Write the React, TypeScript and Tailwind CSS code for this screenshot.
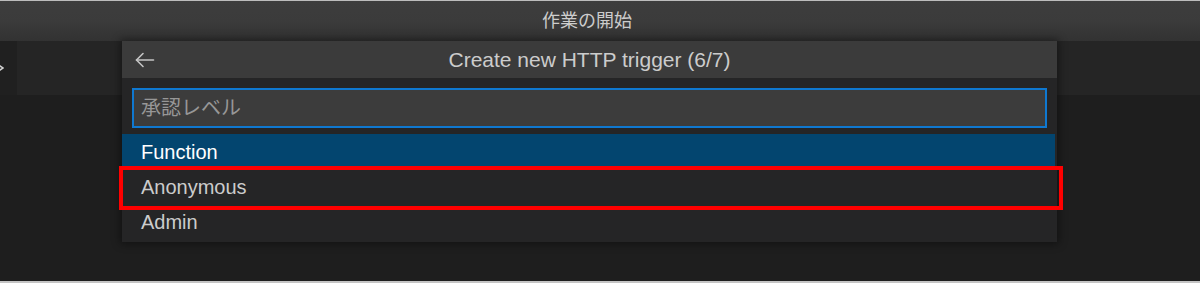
import React from "react";

const items = ["Function", "Anonymous", "Admin"];

function BackArrow() {
  return (
    <svg width="20" height="16" viewBox="0 0 20 16" fill="none" stroke="#c5c5c5" strokeWidth="1.6" strokeLinecap="round" strokeLinejoin="round">
      <path d="M1.5 8h17" />
      <path d="M8 1.5L1.5 8L8 14.5" />
    </svg>
  );
}

// close icon of the previous tab, only its right tip is visible
function CloseTip() {
  return (
    <svg width="4" height="14" viewBox="0 0 4 14" fill="none" stroke="#d0d0d0" strokeWidth="1.5" strokeLinecap="round">
      <path d="M-6 1L3 7L-6 13" />
    </svg>
  );
}

export default function App() {
  return (
    <div
      className="relative w-[1200px] h-[283px] overflow-hidden bg-[#1e1e1e] flex flex-col"
      style={{ fontFamily: '"Liberation Sans", "Noto Sans CJK JP", sans-serif' }}
    >
      {/* window title bar */}
      <div className="h-px bg-[#bcbcbc]" />
      <div className="h-[40px] bg-gradient-to-b from-[#3d3d3d] via-[#3b3b3b] to-[#323232] flex items-center justify-center pr-[26px]">
        <span className="text-[18px] text-[#cccccc] leading-none">作業の開始</span>
      </div>

      {/* editor area */}
      <div className="flex-1 flex flex-col">
        <div className="h-[54px] flex">
          <div className="w-[17px] bg-[#202020] flex items-center">
            <CloseTip />
          </div>
          <div className="flex-1 bg-[#252525]" />
        </div>
        <div className="flex-1 bg-[#1e1e1e]" />
      </div>
      <div className="h-[2px] bg-[#c4c4c4]" />

      {/* quick pick */}
      <div className="absolute left-[122px] top-[41px] w-[935px] bg-[#252526] shadow-[0_0_8px_2px_rgba(0,0,0,0.4)] pb-[3px]">
        <div className="h-[37px] bg-[#3b3b3b] flex items-center relative">
          <div className="pl-[13px] flex items-center">
            <BackArrow />
          </div>
          <div className="absolute inset-0 flex items-center justify-center">
            <span className="text-[21px] text-[#cccccc] leading-none">Create new HTTP trigger (6/7)</span>
          </div>
        </div>
        <div className="px-[10px] pt-[10px] pb-[6px]">
          <div className="h-[40px] border-2 border-[#0f78d0] bg-[#3c3c3c] flex items-center px-[7px]">
            <span className="text-[20px] text-[#979797] leading-none">承認レベル</span>
          </div>
        </div>
        <div className="flex flex-col">
          {items.map((item, i) => (
            <div
              key={item}
              className={
                i === 0
                  ? "h-[35px] mr-[2px] bg-[#03456f] text-white flex items-center pl-[19px] text-[20px]"
                  : "h-[35px] text-[#cccccc] flex items-center pl-[19px] text-[20px]"
              }
            >
              {item}
            </div>
          ))}
        </div>
      </div>

      {/* annotation */}
      <div className="absolute left-[119px] top-[166px] w-[944px] h-[44px] border-4 border-[#ff0000]" />
    </div>
  );
}
